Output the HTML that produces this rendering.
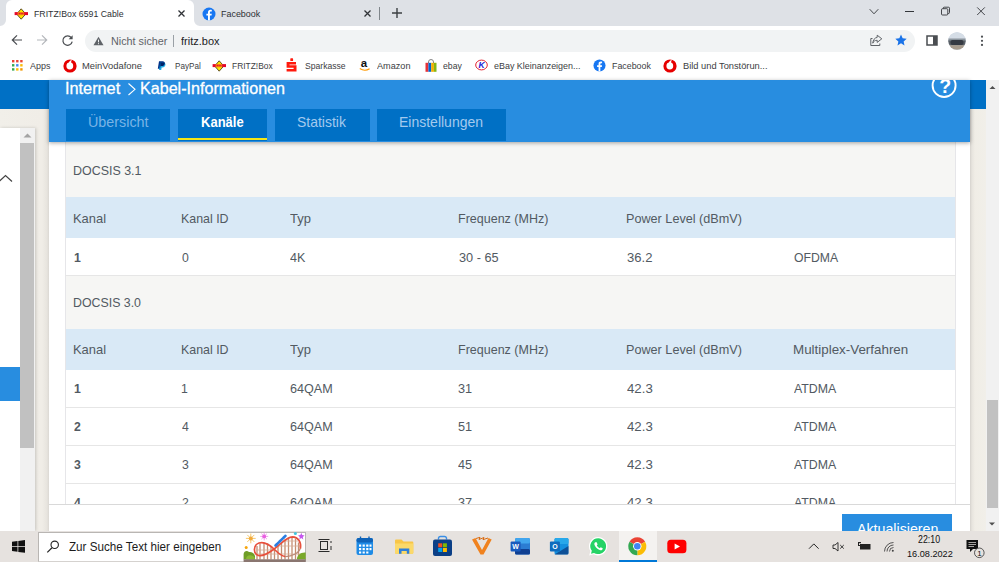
<!DOCTYPE html>
<html lang="de">
<head>
<meta charset="utf-8">
<title>FRITZ!Box 6591 Cable</title>
<style>
*{box-sizing:border-box;margin:0;padding:0}
html,body{width:999px;height:562px;overflow:hidden;background:#fff}
body{position:relative;font-family:"Liberation Sans",sans-serif;color:#202124}
.abs{position:absolute}
.t{position:absolute;z-index:1;white-space:nowrap;line-height:1;transform-origin:0 0;display:inline-block}
</style>
</head>
<body>
<!-- CHROME -->
<div class="abs" style="left:0;top:0;width:999px;height:26px;background:#dee1e6"></div>
<div class="abs" style="left:0;top:26px;width:999px;height:54px;background:#fff"></div>
<div class="abs" style="left:6px;top:0;width:188px;height:27px;background:#fff;border-radius:6px 6px 0 0"></div>
<svg class="abs" style="left:0;top:20px" width="6" height="6" viewBox="0 0 6 6"><path d="M6 0V6H0A6 6 0 0 0 6 0Z" fill="#fff"/></svg>
<svg class="abs" style="left:194px;top:20px" width="6" height="6" viewBox="0 0 6 6"><path d="M0 0V6H6A6 6 0 0 1 0 0Z" fill="#fff"/></svg>
<div class="abs" style="left:379px;top:7px;width:1px;height:13px;background:#80868b"></div>
<!-- tab icons -->
<svg class="abs" style="left:14.4px;top:7.8px" width="14.400" height="12" viewBox="-7.200 -6 14.400 12"><path d="M0 -5.200L4.600 0L0 5.200L-4.600 0Z" fill="#fde500" stroke="#3a2a10" stroke-width=".8"/><rect x="-6.600" y="-1.900" width="13.400" height="3" fill="#e3062a"/><rect x="-3.600" y="-1.900" width="6.600" height="3" fill="#f58a12"/><path d="M-2.500 -0.400H2.200" stroke="#e3062a" stroke-width="1.400" stroke-dasharray="1.200 .6"/></svg>
<svg class="abs" style="left:176.500px;top:9px" width="9" height="9" viewBox="0 0 9 9"><path d="M1.500 1.500L7.500 7.500M7.500 1.500L1.500 7.500" stroke="#303337" stroke-width="1.300"/></svg>
<svg class="abs" style="left:202px;top:6.500px" width="14" height="14" viewBox="0 0 14 14"><circle cx="7" cy="7" r="6.5" fill="#1877f2"/><path d="M7.9 13.4V8.6h1.6l.3-1.9H7.9V5.5c0-.6.3-1 1-1h.9V2.9c-.3 0-.8-.1-1.4-.1-1.5 0-2.4.9-2.4 2.500v1.400H4.400v1.900h1.600v4.800z" fill="#fff"/></svg>
<svg class="abs" style="left:363px;top:9px" width="9" height="9" viewBox="0 0 9 9"><path d="M1.500 1.500L7.500 7.500M7.500 1.500L1.500 7.500" stroke="#303337" stroke-width="1.300"/></svg>
<svg class="abs" style="left:391px;top:7px" width="12" height="12" viewBox="0 0 12 12"><path d="M6 1V11M1 6H11" stroke="#3c4043" stroke-width="1.400"/></svg>
<!-- window controls -->
<svg class="abs" style="left:868px;top:7px" width="12" height="9" viewBox="0 0 12 9"><path d="M1.700 2.200L6 6.800L10.300 2.200" fill="none" stroke="#44474a" stroke-width="1"/></svg>
<div class="abs" style="left:905px;top:11px;width:9px;height:1px;background:#33363a"></div>
<svg class="abs" style="left:940px;top:6px" width="11" height="10" viewBox="0 0 11 10"><rect x="1.500" y="2.700" width="6.300" height="6.300" rx="1" fill="none" stroke="#33363a" stroke-width=".9"/><path d="M3.200 2.700V2.200A1 1 0 0 1 4.200 1.200H8.500A1 1 0 0 1 9.500 2.200V6.500A1 1 0 0 1 8.500 7.500H7.800" fill="none" stroke="#33363a" stroke-width=".9"/></svg>
<svg class="abs" style="left:976px;top:6px" width="10" height="10" viewBox="0 0 10 10"><path d="M1.200 1.400L8.800 9M8.800 1.400L1.200 9" stroke="#33363a" stroke-width=".9"/></svg>
<!-- toolbar -->
<div class="abs" style="left:85px;top:30px;width:830px;height:22px;border-radius:11px;background:#f1f3f4"></div>
<svg class="abs" style="left:11px;top:34px" width="12" height="12" viewBox="0 0 12 12"><path d="M11 6H1.800M6 1.300L1.300 6L6 10.700" fill="none" stroke="#4a4d51" stroke-width="1.200"/></svg>
<svg class="abs" style="left:36px;top:34px" width="12" height="12" viewBox="0 0 12 12"><path d="M1 6H10.200M6 1.300L10.700 6L6 10.700" fill="none" stroke="#b4b7bb" stroke-width="1.200"/></svg>
<svg class="abs" style="left:61px;top:34px" width="13" height="13" viewBox="0 0 13 13"><path d="M10.300 3.600A4.700 4.700 0 1 0 11.200 7.600" fill="none" stroke="#4a4d51" stroke-width="1.250"/><path d="M11.600 1.200V5.200H7.600Z" fill="#4a4d51"/></svg>
<svg class="abs" style="left:93px;top:36px" width="11" height="10" viewBox="0 0 11 10"><path d="M5.500 0.800L10.500 9.200H0.500Z" fill="#5f6368"/><path d="M5.500 3.600V6.300M5.500 7.200V8.200" stroke="#f1f3f4" stroke-width="1"/></svg>
<div class="abs" style="left:173px;top:35px;width:1px;height:12px;background:#9aa0a6"></div>
<svg class="abs" style="left:869px;top:34px" width="14" height="13" viewBox="0 0 14 13"><path d="M3.500 4.500H1.800V11.500H10.800V9.500" fill="none" stroke="#5f6368" stroke-width="1"/><path d="M8.200 1.200L12.800 4.800L8.200 8.400V6.300C5.800 6.300 4.600 7.200 3.800 9.200C4 6 5.600 3.800 8.200 3.400Z" fill="none" stroke="#5f6368" stroke-width="1" stroke-linejoin="round"/></svg>
<svg class="abs" style="left:895px;top:34px" width="12" height="12" viewBox="0 0 12 12"><path d="M6 0.600L7.650 4.300L11.700 4.700L8.650 7.400L9.500 11.400L6 9.300L2.500 11.400L3.350 7.400L0.300 4.700L4.350 4.300Z" fill="#1a73e8"/></svg>
<svg class="abs" style="left:926px;top:35px" width="12" height="11" viewBox="0 0 12 11"><rect x="1" y="1" width="10" height="9" fill="none" stroke="#4a4d51" stroke-width="1.500"/><rect x="7" y="1" width="4" height="9" fill="#4a4d51"/></svg>
<svg class="abs" style="left:948px;top:32px" width="18" height="18" viewBox="0 0 18 18"><defs><clipPath id="av"><circle cx="9" cy="9" r="8.700"/></clipPath></defs><g clip-path="url(#av)"><rect width="18" height="18" fill="#c9d3de"/><rect y="0" width="18" height="7" fill="#d5dde6"/><rect y="6.500" width="18" height="3" fill="#8b949c"/><rect y="8.500" width="18" height="5" fill="#5a6067"/><rect x="2.500" y="8" width="13" height="5" rx="2" fill="#353a42"/><rect y="13.200" width="18" height="5" fill="#a79b8c"/></g></svg>
<svg class="abs" style="left:980px;top:35px" width="4" height="12" viewBox="0 0 4 12"><circle cx="2" cy="1.700" r="1.100" fill="#4a4d51"/><circle cx="2" cy="5.800" r="1.100" fill="#4a4d51"/><circle cx="2" cy="9.900" r="1.100" fill="#4a4d51"/></svg>
<!-- bookmarks icons -->
<svg class="abs" style="left:12px;top:60px" width="11" height="11" viewBox="0 0 11 11"><g><rect x="0" y="0" width="2.400" height="2.400" fill="#ea4335"/><rect x="4.100" y="0" width="2.400" height="2.400" fill="#ea4335"/><rect x="8.200" y="0" width="2.400" height="2.400" fill="#ea4335"/><rect x="0" y="4.100" width="2.400" height="2.400" fill="#34a853"/><rect x="4.100" y="4.100" width="2.400" height="2.400" fill="#4285f4"/><rect x="8.200" y="4.100" width="2.400" height="2.400" fill="#fbbc05"/><rect x="0" y="8.200" width="2.400" height="2.400" fill="#34a853"/><rect x="4.100" y="8.200" width="2.400" height="2.400" fill="#fbbc05"/><rect x="8.200" y="8.200" width="2.400" height="2.400" fill="#f29900"/></g></svg>
<svg class="abs" style="left:62.6px;top:58.5px" width="14" height="14" viewBox="-7 -7 14 14"><circle r="6.600" fill="#e60000"/><circle cx="-0.200" cy="0" r="3.400" fill="#fff"/><path d="M-1.500 -2.200C-1.300 -4.300 0.300 -5.700 2 -5.900C1.300 -5.100 1 -4.200 1.300 -3.100Z" fill="#fff"/></svg>
<svg class="abs" style="left:157px;top:61px" width="9" height="9" viewBox="0 0 9 9"><path d="M2 0.200H5.600C7.300 0.200 8 1.300 7.700 2.700C7.400 4.300 6.300 5 4.800 5H3.700L3.200 7.800H0.800Z" fill="#003087"/><path d="M3.300 1.600H6.400C8 1.600 8.700 2.600 8.400 4C8.100 5.600 7 6.400 5.500 6.400H4.700L4.200 9H2Z" fill="#009cde" opacity=".85"/><path d="M3.300 1.600H6.400C7 1.600 7.400 1.700 7.700 2C7.700 2.200 7.700 2.500 7.700 2.700C7.400 4.300 6.300 5 4.800 5H3.700L3.400 6.800Z" fill="#012169"/></svg>
<svg class="abs" style="left:212.4px;top:59.6px" width="14.400" height="12" viewBox="-7.200 -6 14.400 12"><path d="M0 -5.200L4.600 0L0 5.200L-4.600 0Z" fill="#fde500" stroke="#3a2a10" stroke-width=".8"/><rect x="-6.600" y="-1.900" width="13.400" height="3" fill="#e3062a"/><rect x="-3.600" y="-1.900" width="6.600" height="3" fill="#f58a12"/><path d="M-2.500 -0.400H2.200" stroke="#e3062a" stroke-width="1.400" stroke-dasharray="1.200 .6"/></svg>
<svg class="abs" style="left:286px;top:58px" width="11" height="14" viewBox="0 0 11 14"><rect x="4.300" y="0.300" width="2.800" height="2.700" rx=".6" fill="#ff1a0e"/><path d="M0.600 4H10V6.400H3.500V7.300H10.500V13.500H0.600V11.100H7.600V9.700H0.600Z" fill="#ff1a0e"/></svg>
<svg class="abs" style="left:359px;top:58px" width="12" height="14" viewBox="0 0 12 14"><text x="1.800" y="9.300" font-family="Liberation Sans, sans-serif" font-weight="bold" font-size="11.500" fill="#111">a</text><path d="M0.800 10.600C3.800 12.600 7.600 12.600 10.600 10.800" fill="none" stroke="#ff9900" stroke-width="1.200"/></svg>
<svg class="abs" style="left:425px;top:59px" width="12" height="13" viewBox="0 0 12 13"><path d="M3.500 4V3A2.500 2.500 0 0 1 8.500 3V4" fill="none" stroke="#777" stroke-width=".9"/><rect x="0.500" y="3.800" width="2.900" height="9" fill="#e53238"/><rect x="3.400" y="3.800" width="2.800" height="9" fill="#0064d2"/><rect x="6.200" y="3.800" width="2.700" height="9" fill="#f5af02"/><rect x="8.900" y="3.800" width="2.600" height="9" fill="#86b817"/></svg>
<svg class="abs" style="left:475px;top:59px" width="13" height="12" viewBox="0 0 13 12"><ellipse cx="6.500" cy="6" rx="5.800" ry="4.900" fill="#fff" stroke="#e5202e" stroke-width="1"/><text x="3.600" y="9.200" font-family="Liberation Sans, sans-serif" font-weight="bold" font-style="italic" font-size="8.500" fill="#1a1ad6">K</text></svg>
<svg class="abs" style="left:593px;top:59px" width="13" height="13" viewBox="0 0 14 14"><circle cx="7" cy="7" r="6.500" fill="#1877f2"/><path d="M7.900 13.400V8.600h1.600l.3-1.900H7.900V5.500c0-.6.3-1 1-1h.9V2.900c-.3 0-.8-.1-1.400-.1-1.500 0-2.400.9-2.400 2.500v1.400H4.400v1.900h1.600v4.800z" fill="#fff"/></svg>
<svg class="abs" style="left:663.2px;top:58.5px" width="14" height="14" viewBox="-7 -7 14 14"><circle r="6.600" fill="#e60000"/><circle cx="-0.200" cy="0" r="3.400" fill="#fff"/><path d="M-1.500 -2.200C-1.300 -4.300 0.300 -5.700 2 -5.900C1.300 -5.100 1 -4.200 1.300 -3.100Z" fill="#fff"/></svg>
<!-- PAGE -->

<div class="abs" style="left:0;top:80px;width:999px;height:451px;background:#fff"></div>
<!-- cream side areas -->
<div class="abs" style="left:0;top:109px;width:49.300px;height:422px;background:linear-gradient(to right,#f1efe9 0,#f0ede7 42px,#e7e4de 47px,#d9d6d1 49.300px)"></div>
<div class="abs" style="left:970.400px;top:109px;width:15.600px;height:422px;background:linear-gradient(to right,#d6d3ce 0,#e7e4de 2px,#f0ede6 5px,#f1efe9 16px)"></div>
<!-- sidebar panel -->
<div class="abs" style="left:0;top:128px;width:34.500px;height:403px;background:#fff;box-shadow:1px 0 3px rgba(0,0,0,.18)"></div>
<div class="abs" style="left:19.500px;top:128px;width:15px;height:403px;background:#f1f1f1"></div>
<div class="abs" style="left:20.300px;top:143px;width:13.400px;height:304.500px;background:#c1c1c1"></div>
<svg class="abs" style="left:19.500px;top:127.500px" width="15" height="15" viewBox="0 0 15 15"><path d="M3.5 9.5 L7.5 5.5 L11.5 9.5Z" fill="#a3a3a3"/></svg>
<div class="abs" style="left:0;top:367px;width:19.500px;height:33.500px;background:#288de0"></div>
<svg class="abs" style="left:0;top:172px" width="14" height="12" viewBox="0 0 14 12"><path d="M-1 9.5 L5.5 3.5 L12 9.5" fill="none" stroke="#444" stroke-width="1.2"/></svg>
<!-- table box -->
<div class="abs" style="left:65px;top:141px;width:891px;height:363px;background:#f6f6f4;border-left:1px solid #e6e6e9;border-right:1px solid #e6e6e9;overflow:hidden"></div>
<div class="abs" style="left:66px;top:197px;width:889px;height:41px;background:#d9e9f6"></div>
<div class="abs" style="left:66px;top:238px;width:889px;height:37px;background:#fff"></div>
<div class="abs" style="left:65px;top:275px;width:891px;height:1px;background:#e6e6e6"></div>
<div class="abs" style="left:66px;top:329px;width:889px;height:41px;background:#d9e9f6"></div>
<div class="abs" style="left:66px;top:370px;width:889px;height:134px;background:#fff"></div>
<div class="abs" style="left:65px;top:407px;width:891px;height:1px;background:#e6e6e6"></div>
<div class="abs" style="left:65px;top:445px;width:891px;height:1px;background:#e6e6e6"></div>
<div class="abs" style="left:65px;top:483px;width:891px;height:1px;background:#e6e6e6"></div>
<!-- footer -->
<div class="abs" style="left:49px;top:504px;width:921px;height:27px;background:#fff;border-top:1px solid #d9d9d9;z-index:2"></div>
<div class="abs" style="left:842px;top:514px;width:110px;height:20px;background:#288de0;z-index:2"></div>
<!-- header -->
<div class="abs" style="left:0;top:80px;width:50px;height:29px;background:#0070c5"></div>
<div class="abs" style="left:970px;top:80px;width:16px;height:29px;background:#0070c5"></div>
<div class="abs" style="left:49.300px;top:80px;width:921.100px;height:61.500px;background:#288de0;box-shadow:0 1px 4px rgba(0,0,0,.35)"></div>
<div class="abs" style="left:66px;top:109px;width:104px;height:32px;background:#0070c5"></div>
<div class="abs" style="left:178px;top:109px;width:89px;height:32px;background:#0070c5"></div>
<div class="abs" style="left:178px;top:137.500px;width:89px;height:2.500px;background:#f5e616"></div>
<div class="abs" style="left:275px;top:109px;width:95px;height:32px;background:#0070c5"></div>
<div class="abs" style="left:377px;top:109px;width:129px;height:32px;background:#0070c5"></div>
<svg class="abs" style="left:127px;top:82px" width="10" height="14" viewBox="0 0 10 14"><path d="M1.500 1.500L8 7.300L1.500 13" fill="none" stroke="#fff" stroke-width="1.100"/></svg>
<svg class="abs" style="left:930px;top:80px" width="28" height="22" viewBox="930 80 28 22"><circle cx="944.100" cy="85.500" r="11.500" fill="none" stroke="#fff" stroke-width="1.900"/><text x="939.300" y="92.900" font-family="Liberation Sans, sans-serif" font-weight="bold" font-size="19.500" fill="#fff">?</text></svg>
<!-- right scrollbar -->
<div class="abs" style="left:986px;top:80px;width:13px;height:451px;background:#f1f1f1"></div>
<div class="abs" style="left:987px;top:400px;width:11px;height:108px;background:#c1c1c1"></div>
<svg class="abs" style="left:986px;top:80px" width="13" height="14" viewBox="0 0 13 14"><path d="M3.5 9 L6.5 6 L9.5 9Z" fill="#505050"/></svg>
<svg class="abs" style="left:986px;top:516px" width="13" height="14" viewBox="0 0 13 14"><path d="M3 6.500 L6 9.500 L9 6.500Z" fill="#505050"/></svg>

<!-- TASKBAR -->
<div class="abs" style="left:0;top:531px;width:999px;height:31px;background:#e6e2df;z-index:4"></div>
<div class="abs" style="left:38px;top:532px;width:268px;height:30px;background:#fff;border:1px solid #b9b6b3;border-bottom-color:#d5d2cf;z-index:4"></div>
<div class="abs" style="left:619px;top:531px;width:38px;height:31px;background:#f4f2f0;border-bottom:2px solid #0078d7;z-index:4"></div>
<svg class="abs" style="left:0;top:531px;z-index:5" width="999" height="31" viewBox="0 531 999 31">
<!-- windows logo -->
<path d="M12 541.800L17.500 541V546H12ZM18.300 540.900L25 540V546H18.300ZM12 546.800H17.500V551.800L12 551ZM18.300 546.800H25V552.800L18.300 551.900Z" fill="#111"/>
<!-- search icon -->
<circle cx="54.700" cy="544.800" r="3.700" fill="none" stroke="#222" stroke-width="1.100"/><path d="M52 547.800L47.300 552.400" stroke="#222" stroke-width="1.200"/>
<!-- rollercoaster doodle -->
<g>
<path d="M257 559.500V546M260 559.500V543.5M264 559.500V542.7M267.5 559.500V543.5M271 559.500V546.5M274.5 559.500V549.5M278 559.500V546M281.5 559.500V542.5M285 559.500V539.5M288.5 559.500V537.5M292 559.500V537M295.5 559.500V538.5M298.5 559.500V542.5" stroke="#c48d70" stroke-width="1.300"/>
<path d="M256 550H274M256 554H300M276 546H300M282 541H298" stroke="#d6ab95" stroke-width=".8"/>
<path d="M300.400 548C299 553 292 557 284 556.500" fill="none" stroke="#b98a78" stroke-width="1.200"/>
<path d="M273.500 549.500C280 545 286 537 292.500 536.800C298 537 301.500 542 300.400 548.500" fill="none" stroke="#e8503c" stroke-width="1.700"/>
<path d="M273.500 549.500C268 553.500 263 556.500 258.500 555.500C253 554 253 545 259 543C265 541.200 270 545 274.500 549.500C278 553 281 556 285 556.500" fill="none" stroke="#e8503c" stroke-width="1.700"/>
<path d="M275.500 545.500L285.500 535.800" stroke="#2a7de1" stroke-width="2.600" stroke-linecap="round" stroke-dasharray="2.200 .500"/>
<path d="M243.600 559.500V554C244 551 247 550 249 552C251 551.500 254.500 553 255 556V559.500Z" fill="#6f9e26"/>
<path d="M246 559.500C246 556 249 554.500 251.500 555.500C254 556 255 557.500 255 559.500Z" fill="#8bb933"/>
<path d="M296.800 559.500C297 555 301 552 305.700 552.600V559.500Z" fill="#7aa92b"/>
<rect x="243.600" y="559.300" width="62.100" height="2.700" fill="#8a7670"/>
<g stroke="#f4b942" stroke-width=".9" opacity=".85"><path d="M250.800 533.500V543.300M245.900 538.400H255.700M247.300 534.900L254.300 541.900M254.300 534.900L247.300 541.900"/></g><circle cx="250.800" cy="538.400" r="2" fill="#f2a93a"/>
<circle cx="246.200" cy="547.400" r="1.500" fill="#f6a50d"/>
<g stroke="#ee7fe6" stroke-width=".9" opacity=".85"><path d="M264.200 532.400V540.400M260.200 536.400H268.200M261.400 533.600L267 539.200M267 533.600L261.400 539.200"/></g><circle cx="264.200" cy="536.400" r="1.900" fill="#e85fe0"/>
<circle cx="295.400" cy="533.400" r="1.500" fill="#3fc6e0"/>
<path d="M301.300 532.800L302.200 535.100L304.600 535.400L302.800 537L303.300 539.400L301.300 538.100L299.300 539.400L299.800 537L298 535.400L300.400 535.100Z" fill="#c557ee"/>
</g>
<!-- task view -->
<g fill="none" stroke="#2b2b2b" stroke-width="1"><rect x="320.500" y="541.500" width="7" height="8"/><path d="M318.500 539.500H329.500M318.500 551.500H329.500M331 541V543M331 546V550"/></g>
<!-- calendar -->
<rect x="356.500" y="538" width="16.500" height="17" rx="2" fill="#1e8be6"/><rect x="356.500" y="538" width="16.500" height="4.500" rx="2" fill="#0f63b8"/>
<g fill="#fff"><rect x="359" y="544.500" width="2.200" height="2.200"/><rect x="362.600" y="544.500" width="2.200" height="2.200"/><rect x="366.200" y="544.500" width="2.200" height="2.200"/><rect x="369.500" y="544.500" width="2" height="2.200"/><rect x="359" y="548" width="2.200" height="2.200"/><rect x="362.600" y="548" width="2.200" height="2.200"/><rect x="366.200" y="548" width="2.200" height="2.200"/><rect x="369.500" y="548" width="2" height="2.200"/><rect x="359" y="551.500" width="2.200" height="2"/><rect x="362.600" y="551.500" width="2.200" height="2"/><rect x="366.200" y="551.500" width="2.200" height="2"/></g>
<path d="M360.500 536.500V539.500M369 536.500V539.500" stroke="#0f63b8" stroke-width="1.400"/>
<!-- explorer -->
<path d="M395 540.500A1 1 0 0 1 396 539.500H401.500L403.500 541.500H412.300A1 1 0 0 1 413.300 542.500V552.800A1 1 0 0 1 412.300 553.800H396A1 1 0 0 1 395 552.800Z" fill="#f8c647"/>
<path d="M395 543.500H413.300V552.800A1 1 0 0 1 412.300 553.800H396A1 1 0 0 1 395 552.800Z" fill="#fbd96a"/>
<path d="M399 553.800V548.500H409.300V553.800H406.800V551H401.500V553.800Z" fill="#2f7fd9"/>
<!-- store -->
<path d="M438.500 539.500V538A2 2 0 0 1 440.500 536.500H444.500A2 2 0 0 1 446.500 538V539.500" fill="none" stroke="#3a8ee6" stroke-width="1.400"/>
<rect x="433" y="539.500" width="19" height="16.500" rx="2" fill="#0b3f86"/>
<rect x="438.200" y="543.300" width="4" height="4" fill="#f25022"/><rect x="442.900" y="543.300" width="4" height="4" fill="#7fba00"/><rect x="438.200" y="548" width="4" height="4" fill="#00a4ef"/><rect x="442.900" y="548" width="4" height="4" fill="#ffb900"/>
<!-- V icon -->
<path d="M472 539.500L475.500 538L482 550L488.500 538L491.700 539.500L483.500 554.600H480.500Z" fill="#f0821e"/>
<path d="M476 538.500L480 537.300L479 539.500L484 537.500L483 539.700L488 538" fill="none" stroke="#d96a10" stroke-width="1"/>
<!-- word -->
<rect x="515" y="538" width="15" height="16.500" rx="1.500" fill="#2b7cd3"/><rect x="515" y="538" width="15" height="5.500" rx="1.500" fill="#41a5ee"/><rect x="515" y="549" width="15" height="5.500" rx="1.500" fill="#103f91"/>
<rect x="510.600" y="541.500" width="10" height="10" rx="1" fill="#185abd"/>
<text x="512.300" y="549.300" font-family="Liberation Sans, sans-serif" font-weight="bold" font-size="7" fill="#fff">W</text>
<!-- outlook -->
<rect x="554.500" y="538" width="14" height="16.500" rx="1.500" fill="#1490df"/><rect x="554.500" y="538" width="14" height="6" rx="1.500" fill="#28a8ea"/><path d="M554.500 554.500L568.500 546V553A1.500 1.500 0 0 1 567 554.500Z" fill="#0a2767" opacity=".6"/>
<rect x="549.900" y="541.500" width="10" height="10" rx="1" fill="#0f6cbd"/>
<text x="552.200" y="549.300" font-family="Liberation Sans, sans-serif" font-weight="bold" font-size="7" fill="#fff">O</text>
<!-- whatsapp -->
<path d="M598.200 537A9.200 9.200 0 1 1 593.600 554.200L589.200 555.400L590.400 551.100A9.200 9.200 0 0 1 598.200 537Z" fill="#fff"/>
<path d="M598.200 538.300A7.900 7.900 0 1 1 594 552.900L591 553.700L591.800 550.800A7.900 7.900 0 0 1 598.200 538.300Z" fill="#25d366"/>
<path d="M595.300 542.200C594.300 542.600 594 544 594.800 545.600C595.800 547.600 597.600 549.300 599.800 550.100C601.200 550.600 602.300 550 602.600 549L602.700 548.200L600.700 547.200L599.800 548.200C598.500 547.700 597.300 546.500 596.800 545.300L597.600 544.400L596.700 542.300Z" fill="#fff"/>
<!-- chrome -->
<circle cx="637.300" cy="546.200" r="9" fill="#fff"/>
<path d="M637.300 546.200L629.500 541.700A9 9 0 0 1 645.100 541.700Z" fill="#ea4335"/>
<path d="M637.300 546.200L645.100 541.700A9 9 0 0 1 637.300 555.200Z" fill="#fbbc05"/>
<path d="M637.300 546.200L637.300 555.200A9 9 0 0 1 629.500 541.700Z" fill="#34a853"/>
<circle cx="637.300" cy="546.200" r="4.200" fill="#fff"/><circle cx="637.300" cy="546.200" r="3.300" fill="#4285f4"/>
<!-- youtube -->
<rect x="667.300" y="539.800" width="19.100" height="13.400" rx="3.500" fill="#ff0000"/><path d="M674.600 543.400V549.600L680 546.500Z" fill="#fff"/>
<!-- tray -->
<path d="M809 548.700L813.800 543.900L818.600 548.700" fill="none" stroke="#222" stroke-width="1"/>
<path d="M833 545H835L838 542.500V551L835 548.500H833Z" fill="none" stroke="#222" stroke-width=".9"/><path d="M840.200 545L843.800 548.600M843.800 545L840.200 548.600" stroke="#222" stroke-width=".9"/>
<rect x="860" y="544" width="10.500" height="5.500" fill="#222"/><path d="M858 545.500H860M858.500 542.500V546" stroke="#222" stroke-width="1"/><rect x="858" y="542" width="3" height="1.200" fill="#222"/>
<g fill="none" stroke="#444" stroke-width=".9"><path d="M884.500 551.500A9 9 0 0 1 893.500 542.500"/><path d="M887 551.500A6.500 6.500 0 0 1 893.500 545"/><path d="M889.500 551.500A4 4 0 0 1 893.500 547.500"/></g><circle cx="892.800" cy="550.800" r="1" fill="#444"/>
<!-- notification -->
<path d="M966.500 540H978V549H973L970 552V549H966.500Z" fill="#111"/>
<path d="M968.500 542.500H976M968.500 544.500H976M968.500 546.500H974" stroke="#e6e2df" stroke-width=".7"/>
<circle cx="979.300" cy="552.800" r="4.800" fill="#e6e2df" stroke="#333" stroke-width=".8"/>
<text x="977.300" y="555.800" font-family="Liberation Sans, sans-serif" font-size="8" fill="#111">1</text>
</svg>
<span class="t" style="left:72.6px;top:163.5px;font-size:13.6px;color:#525a62;transform:scaleX(0.916);">DOCSIS 3.1</span>
<span class="t" style="left:72.5px;top:211.5px;font-size:13.6px;color:#525a62;transform:scaleX(0.951);">Kanal</span>
<span class="t" style="left:181.3px;top:211.5px;font-size:13.6px;color:#525a62;transform:scaleX(0.912);">Kanal ID</span>
<span class="t" style="left:290.3px;top:211.5px;font-size:13.6px;color:#525a62;transform:scaleX(0.955);">Typ</span>
<span class="t" style="left:457.7px;top:211.5px;font-size:13.6px;color:#525a62;transform:scaleX(0.920);">Frequenz (MHz)</span>
<span class="t" style="left:625.9px;top:211.5px;font-size:13.6px;color:#525a62;transform:scaleX(0.930);">Power Level (dBmV)</span>
<span class="t" style="left:72.5px;top:343.0px;font-size:13.6px;color:#525a62;transform:scaleX(0.951);">Kanal</span>
<span class="t" style="left:181.3px;top:343.0px;font-size:13.6px;color:#525a62;transform:scaleX(0.912);">Kanal ID</span>
<span class="t" style="left:290.3px;top:343.0px;font-size:13.6px;color:#525a62;transform:scaleX(0.955);">Typ</span>
<span class="t" style="left:457.7px;top:343.0px;font-size:13.6px;color:#525a62;transform:scaleX(0.920);">Frequenz (MHz)</span>
<span class="t" style="left:625.9px;top:343.0px;font-size:13.6px;color:#525a62;transform:scaleX(0.930);">Power Level (dBmV)</span>
<span class="t" style="left:793.3px;top:343.0px;font-size:13.6px;color:#525a62;transform:scaleX(0.984);">Multiplex-Verfahren</span>
<span class="t" style="left:73.8px;top:250.8px;font-size:13.6px;color:#525a62;font-weight:bold;transform:scaleX(0.900);">1</span>
<span class="t" style="left:182.2px;top:250.8px;font-size:13.6px;color:#525a62;transform:scaleX(0.900);">0</span>
<span class="t" style="left:290.3px;top:250.8px;font-size:13.6px;color:#525a62;transform:scaleX(0.924);">4K</span>
<span class="t" style="left:458.6px;top:250.8px;font-size:13.6px;color:#525a62;transform:scaleX(0.936);">30 - 65</span>
<span class="t" style="left:626.8px;top:250.8px;font-size:13.6px;color:#525a62;transform:scaleX(0.961);">36.2</span>
<span class="t" style="left:794.3px;top:250.8px;font-size:13.6px;color:#525a62;transform:scaleX(0.898);">OFDMA</span>
<span class="t" style="left:72.6px;top:295.5px;font-size:13.6px;color:#525a62;transform:scaleX(0.909);">DOCSIS 3.0</span>
<span class="t" style="left:73.8px;top:382.0px;font-size:13.6px;color:#525a62;font-weight:bold;transform:scaleX(0.900);">1</span>
<span class="t" style="left:181.3px;top:382.0px;font-size:13.6px;color:#525a62;transform:scaleX(0.900);">1</span>
<span class="t" style="left:290.3px;top:382.0px;font-size:13.6px;color:#525a62;transform:scaleX(0.927);">64QAM</span>
<span class="t" style="left:458.4px;top:382.0px;font-size:13.6px;color:#525a62;transform:scaleX(0.934);">31</span>
<span class="t" style="left:626.5px;top:382.0px;font-size:13.6px;color:#525a62;transform:scaleX(0.973);">42.3</span>
<span class="t" style="left:794.3px;top:382.0px;font-size:13.6px;color:#525a62;transform:scaleX(0.909);">ATDMA</span>
<span class="t" style="left:73.8px;top:420.1px;font-size:13.6px;color:#525a62;font-weight:bold;transform:scaleX(0.900);">2</span>
<span class="t" style="left:182.2px;top:420.1px;font-size:13.6px;color:#525a62;transform:scaleX(0.900);">4</span>
<span class="t" style="left:290.3px;top:420.1px;font-size:13.6px;color:#525a62;transform:scaleX(0.927);">64QAM</span>
<span class="t" style="left:458.4px;top:420.1px;font-size:13.6px;color:#525a62;transform:scaleX(0.934);">51</span>
<span class="t" style="left:626.5px;top:420.1px;font-size:13.6px;color:#525a62;transform:scaleX(0.973);">42.3</span>
<span class="t" style="left:794.3px;top:420.1px;font-size:13.6px;color:#525a62;transform:scaleX(0.909);">ATDMA</span>
<span class="t" style="left:73.8px;top:458.3px;font-size:13.6px;color:#525a62;font-weight:bold;transform:scaleX(0.900);">3</span>
<span class="t" style="left:182.2px;top:458.3px;font-size:13.6px;color:#525a62;transform:scaleX(0.900);">3</span>
<span class="t" style="left:290.3px;top:458.3px;font-size:13.6px;color:#525a62;transform:scaleX(0.927);">64QAM</span>
<span class="t" style="left:458.4px;top:458.3px;font-size:13.6px;color:#525a62;transform:scaleX(0.934);">45</span>
<span class="t" style="left:626.5px;top:458.3px;font-size:13.6px;color:#525a62;transform:scaleX(0.973);">42.3</span>
<span class="t" style="left:794.3px;top:458.3px;font-size:13.6px;color:#525a62;transform:scaleX(0.909);">ATDMA</span>
<span class="t" style="left:73.8px;top:496.3px;font-size:13.6px;color:#525a62;font-weight:bold;transform:scaleX(0.900);">4</span>
<span class="t" style="left:182.2px;top:496.3px;font-size:13.6px;color:#525a62;transform:scaleX(0.900);">2</span>
<span class="t" style="left:290.3px;top:496.3px;font-size:13.6px;color:#525a62;transform:scaleX(0.927);">64QAM</span>
<span class="t" style="left:458.4px;top:496.3px;font-size:13.6px;color:#525a62;transform:scaleX(0.934);">37</span>
<span class="t" style="left:626.5px;top:496.3px;font-size:13.6px;color:#525a62;transform:scaleX(0.973);">42.3</span>
<span class="t" style="left:794.3px;top:496.3px;font-size:13.6px;color:#525a62;transform:scaleX(0.909);">ATDMA</span>
<span class="t" style="left:65.2px;top:80.2px;font-size:16.5px;color:#ffffff;transform:scaleX(0.986);-webkit-text-stroke:.3px #fff;">Internet</span>
<span class="t" style="left:139.5px;top:80.2px;font-size:16.5px;color:#ffffff;transform:scaleX(0.976);-webkit-text-stroke:.3px #fff;">Kabel-Informationen</span>
<span class="t" style="left:88.0px;top:115.4px;font-size:14.5px;color:#79b4e6;transform:scaleX(0.988);">Übersicht</span>
<span class="t" style="left:201.2px;top:115.4px;font-size:14.5px;color:#ffffff;font-weight:bold;transform:scaleX(0.897);">Kanäle</span>
<span class="t" style="left:297.4px;top:115.4px;font-size:14.5px;color:#a3caee;transform:scaleX(0.963);">Statistik</span>
<span class="t" style="left:399.0px;top:115.4px;font-size:14.5px;color:#a3caee;transform:scaleX(0.965);">Einstellungen</span>
<span class="t" style="left:857.0px;top:521.3px;font-size:15px;color:#ffffff;transform:scaleX(0.947);z-index:3;">Aktualisieren</span>
<span class="t" style="left:34.2px;top:8.6px;font-size:9.5px;color:#2e3135;transform:scaleX(0.922);">FRITZ!Box 6591 Cable</span>
<span class="t" style="left:220.5px;top:8.6px;font-size:9.5px;color:#2e3135;transform:scaleX(0.941);">Facebook</span>
<span class="t" style="left:111.2px;top:36.5px;font-size:10.3px;color:#5f6368;transform:scaleX(1.049);">Nicht sicher</span>
<span class="t" style="left:181.2px;top:36.5px;font-size:10.3px;color:#202124;transform:scaleX(1.068);">fritz.box</span>
<span class="t" style="left:29.9px;top:60.6px;font-size:9.5px;color:#3c4043;transform:scaleX(0.940);">Apps</span>
<span class="t" style="left:82.3px;top:60.6px;font-size:9.5px;color:#3c4043;transform:scaleX(0.987);">MeinVodafone</span>
<span class="t" style="left:174.5px;top:60.6px;font-size:9.5px;color:#3c4043;transform:scaleX(0.854);">PayPal</span>
<span class="t" style="left:231.8px;top:60.6px;font-size:9.5px;color:#3c4043;transform:scaleX(0.886);">FRITZ!Box</span>
<span class="t" style="left:304.7px;top:60.6px;font-size:9.5px;color:#3c4043;transform:scaleX(0.904);">Sparkasse</span>
<span class="t" style="left:377.4px;top:60.6px;font-size:9.5px;color:#3c4043;transform:scaleX(0.960);">Amazon</span>
<span class="t" style="left:443.0px;top:60.6px;font-size:9.5px;color:#3c4043;transform:scaleX(0.911);">ebay</span>
<span class="t" style="left:494.1px;top:60.6px;font-size:9.5px;color:#3c4043;transform:scaleX(0.941);">eBay Kleinanzeigen...</span>
<span class="t" style="left:612.1px;top:60.6px;font-size:9.5px;color:#3c4043;transform:scaleX(0.932);">Facebook</span>
<span class="t" style="left:683.3px;top:60.6px;font-size:9.5px;color:#3c4043;transform:scaleX(0.978);">Bild und Tonstörun...</span>
<span class="t" style="left:69.0px;top:541.0px;font-size:12.5px;color:#1c1c1c;transform:scaleX(0.933);z-index:6;">Zur Suche Text hier eingeben</span>
<span class="t" style="left:918.0px;top:535.0px;font-size:10px;color:#111;transform:scaleX(0.880);z-index:6;">22:10</span>
<span class="t" style="left:906.6px;top:549.0px;font-size:9.7px;color:#111;transform:scaleX(0.944);z-index:6;">16.08.2022</span>

</body>
</html>
